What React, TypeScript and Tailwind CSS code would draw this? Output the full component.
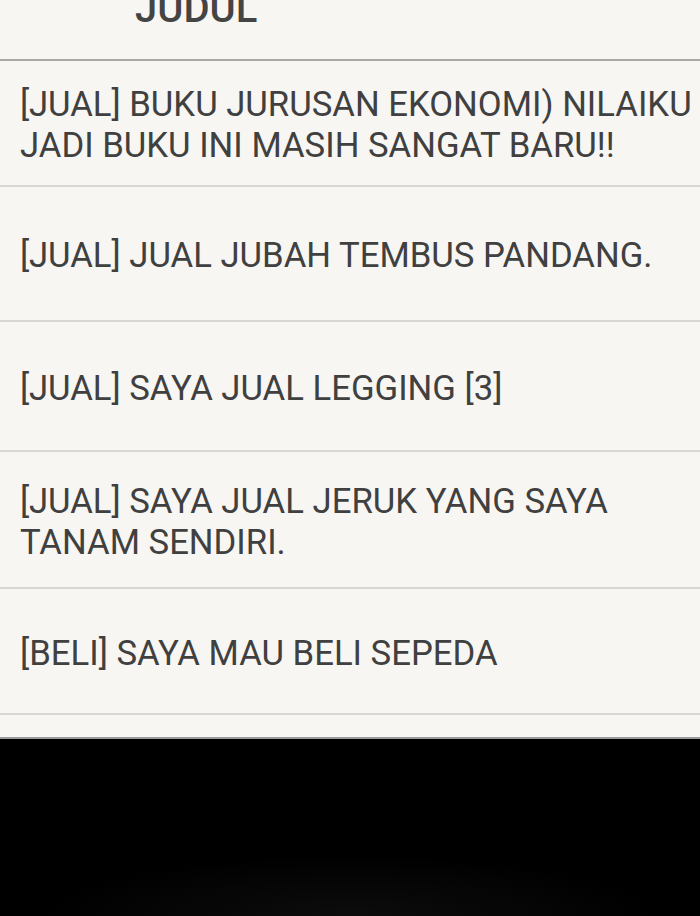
import React from "react";

const rows: { lines: string[]; h: string }[] = [
  { lines: ["[JUAL] BUKU JURUSAN EKONOMI) NILAIKU", "JADI BUKU INI MASIH SANGAT BARU!!"], h: "h-[126px]" },
  { lines: ["[JUAL] JUAL JUBAH TEMBUS PANDANG."], h: "h-[135px]" },
  { lines: ["[JUAL] SAYA JUAL LEGGING [3]"], h: "h-[130px]" },
  { lines: ["[JUAL] SAYA JUAL JERUK YANG SAYA", "TANAM SENDIRI."], h: "h-[137px]" },
  { lines: ["[BELI] SAYA MAU BELI SEPEDA"], h: "h-[126px]" },
];

export default function App() {
  return (
    <div
      className="w-[700px] h-[916px] overflow-hidden bg-[#f7f6f3] flex flex-col"
      style={{ fontFamily: "Roboto, 'Liberation Sans', sans-serif" }}
    >
      <div className="h-[61px] shrink-0 border-b-2 border-[#a9a9a9] flex items-start pl-[135px] overflow-hidden">
        <div className="text-[40px] leading-none font-medium text-[#444444] -mt-[11px]">JUDUL</div>
      </div>
      {rows.map((r, i) => (
        <div
          key={i}
          className={`${r.h} shrink-0 border-b-2 border-[#d8d7d4] flex flex-col justify-center pl-[20px] pt-[4px] text-[#404040] text-[34.7px] leading-[41px] font-normal whitespace-nowrap`}
        >
          {r.lines.map((l, j) => (
            <div key={j}>{l}</div>
          ))}
        </div>
      ))}
      <div className="h-[24px] shrink-0 border-b-2 border-[#9a9a9a]" />
      <div className="flex-1 bg-[radial-gradient(ellipse_45%_35%_at_50%_100%,#0c0c0c_0%,#000000_100%)]" />
    </div>
  );
}
